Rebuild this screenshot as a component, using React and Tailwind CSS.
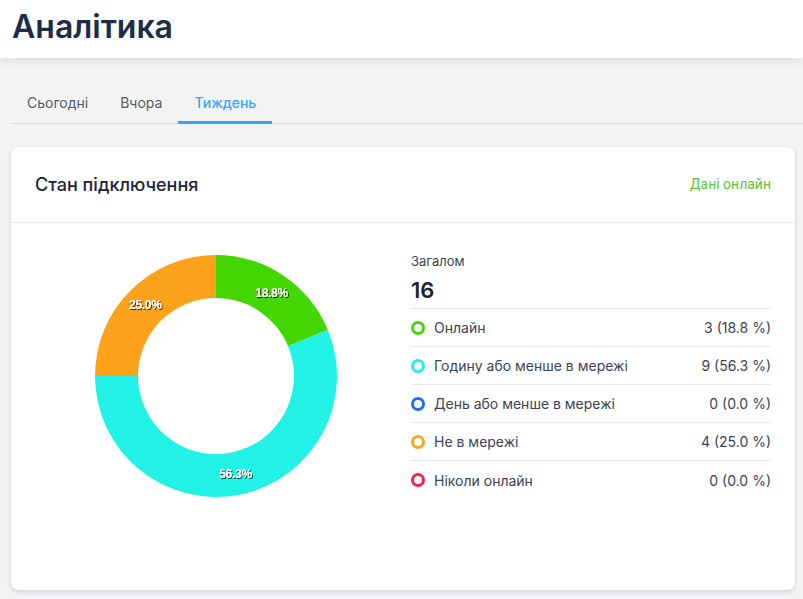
import React from "react";

const segments = [
  { value: 3, color: "#44d600", label: "18.8%" },
  { value: 9, color: "#22f2e6", label: "56.3%" },
  { value: 4, color: "#fda31b", label: "25.0%" },
];

const rows = [
  { name: "Онлайн", value: "3 (18.8 %)", color: "#44d600" },
  { name: "Годину або менше в мережі", value: "9 (56.3 %)", color: "#22f2e6" },
  { name: "День або менше в мережі", value: "0 (0.0 %)", color: "#1e6ef5" },
  { name: "Не в мережі", value: "4 (25.0 %)", color: "#fda31b" },
  { name: "Ніколи онлайн", value: "0 (0.0 %)", color: "#f0234a" },
];

const point = (cx, cy, r, a) => [cx + r * Math.sin(a), cy - r * Math.cos(a)];

const Donut = () => {
  const cx = 122;
  const cy = 122;
  const outer = 121;
  const inner = 78;
  const total = segments.reduce((s, x) => s + x.value, 0);
  let start = 0;

  return (
    <svg width="244" height="244" viewBox="0 0 244 244">
      <defs>
        <filter id="txtShadow" x="-20%" y="-20%" width="140%" height="140%">
          <feDropShadow dx="1" dy="1" stdDeviation="0.6" floodColor="#000" floodOpacity="0.75" />
        </filter>
      </defs>
      {segments.map((seg, i) => {
        const a0 = (start / total) * Math.PI * 2;
        const a1 = ((start + seg.value) / total) * Math.PI * 2;
        start += seg.value;
        const large = a1 - a0 > Math.PI ? 1 : 0;
        const [x0, y0] = point(cx, cy, outer, a0);
        const [x1, y1] = point(cx, cy, outer, a1);
        const [x2, y2] = point(cx, cy, inner, a1);
        const [x3, y3] = point(cx, cy, inner, a0);
        const d = `M${x0} ${y0} A${outer} ${outer} 0 ${large} 1 ${x1} ${y1} L${x2} ${y2} A${inner} ${inner} 0 ${large} 0 ${x3} ${y3} Z`;
        const mid = (a0 + a1) / 2;
        const [lx, ly] = point(cx, cy, 100, mid);
        return (
          <g key={i}>
            <path d={d} fill={seg.color} />
            <text
              x={lx}
              y={ly + 4}
              textAnchor="middle"
              fill="#fff"
              fontSize="12"
              fontWeight="bold"
              fontFamily="'Liberation Sans', sans-serif"
              letterSpacing="-0.3"
              filter="url(#txtShadow)"
            >
              {seg.label}
            </text>
          </g>
        );
      })}
    </svg>
  );
};

const App = () => {
  return (
    <div className="min-h-screen bg-[#f3f3f4] font-['Inter',sans-serif]">
      <div className="h-[58px] bg-white px-3 flex items-center shadow-[0_4px_10px_rgba(0,0,0,0.08)] relative">
        <h1 className="text-[32px] font-semibold text-[#1c2d45] leading-none -mt-[4px]">Аналітика</h1>
      </div>

      <div className="pl-[11px] pr-0 pt-[27px]">
        <div className="flex border-b border-[#d6d6d6] h-[39px]">
          <div className="px-4 text-[14px] text-[#555a61] flex items-center -mt-[4px]">Сьогодні</div>
          <div className="px-4 text-[14px] text-[#555a61] flex items-center -mt-[4px]">Вчора</div>
          <div className="px-4 text-[14px] text-[#35a6f4] font-medium flex items-center border-b-[3px] border-[#35a6f4] -mb-px">
            <span className="-mt-[2px]">Тиждень</span>
          </div>
        </div>

        <div className="mt-[23px] mr-[8px] bg-white rounded-lg shadow-[0_2px_4px_rgba(60,50,110,0.18)] h-[443px]">
          <div className="h-[76px] flex items-center justify-between px-6 border-b border-[#e8e8ec]">
            <span className="text-[18px] font-medium text-[#1d2535]">Стан підключення</span>
            <span className="text-[14px] text-[#5ec63c] font-['Roboto',sans-serif]">Дані онлайн</span>
          </div>
          <div className="flex pt-[31px]">
            <div className="w-[400px] pl-[83px]">
              <Donut />
            </div>
            <div className="w-[360px] text-[#3b4352]">
              <div className="text-[13px] leading-[16px] -mt-[1px]">Загалом</div>
              <div className="text-[22px] font-semibold text-[#1c2230] leading-[26px] mt-[8px] pb-[5px] border-b border-[#e8e8ec]">16</div>
              {rows.map((row, i) => (
                <div
                  key={row.name}
                  className={`flex items-center justify-between h-[38px] text-[14px] ${i < rows.length - 1 ? "border-b border-[#e8e8ec]" : ""}`}
                >
                  <div className="flex items-center gap-[9px]">
                    <span
                      className="w-[14px] h-[14px] rounded-full border-[3px] box-border"
                      style={{ borderColor: row.color }}
                    />
                    <span>{row.name}</span>
                  </div>
                  <span>{row.value}</span>
                </div>
              ))}
            </div>
          </div>
        </div>
      </div>
    </div>
  );
};

export default App;
